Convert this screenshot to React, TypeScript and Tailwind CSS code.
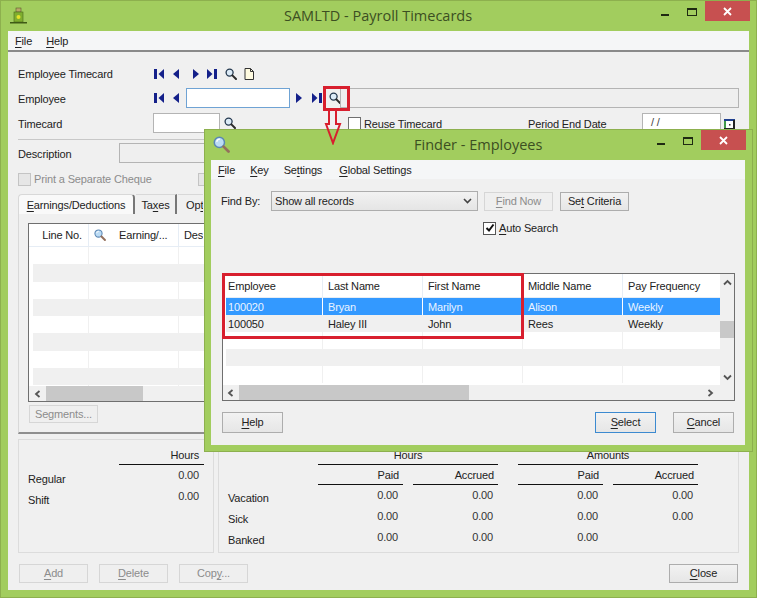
import React from "react";

type Dir = "first" | "prev" | "next" | "last";

function Nav({ dir, className = "" }: { dir: Dir; className?: string }) {
  const paths: Record<Dir, React.ReactNode> = {
    first: (
      <>
        <rect x="0" y="0" width="3" height="10" fill="#14208a" />
        <path d="M10 0V10L4.5 5Z" fill="#14208a" />
      </>
    ),
    prev: <path d="M7 0V10L1 5Z" fill="#14208a" />,
    next: <path d="M3 0V10L9 5Z" fill="#14208a" />,
    last: (
      <>
        <rect x="7" y="0" width="3" height="10" fill="#14208a" />
        <path d="M0 0V10L5.5 5Z" fill="#14208a" />
      </>
    ),
  };
  return (
    <svg width="10" height="10" viewBox="0 0 10 10" className={`shrink-0 ${className}`}>
      {paths[dir]}
    </svg>
  );
}

function Lens({ className = "" }: { className?: string }) {
  return (
    <svg width="12" height="12" viewBox="0 0 12 12" className={`shrink-0 ${className}`}>
      <circle cx="4.6" cy="4.6" r="3.5" fill="#dcebf7" stroke="#24384f" strokeWidth="1.3" />
      <path d="M7.4 7.4L11 11" stroke="#2b2b2b" strokeWidth="2" strokeLinecap="round" />
    </svg>
  );
}

function BigLens({ size = 16, className = "" }: { size?: number; className?: string }) {
  return (
    <svg width={size} height={size} viewBox="0 0 16 16" className={`shrink-0 ${className}`}>
      <circle cx="6" cy="6" r="4.8" fill="#bcdcf5" stroke="#5b87b4" strokeWidth="1.4" />
      <path d="M3.5 5.5A3 3 0 0 1 6.5 3" stroke="#ffffff" strokeWidth="1.2" fill="none" />
      <path d="M10 10L14.6 14.6" stroke="#94705c" strokeWidth="2.6" strokeLinecap="round" />
    </svg>
  );
}

function U({ children }: { children: React.ReactNode }) {
  return <span className="underline underline-offset-2 decoration-1">{children}</span>;
}

function Btn({
  children,
  w = "w-[69px]",
  h = "h-[19px]",
  disabled,
  primary,
  className = "",
}: {
  children: React.ReactNode;
  w?: string;
  h?: string;
  disabled?: boolean;
  primary?: boolean;
  className?: string;
}) {
  const tone = disabled
    ? "border-[#d6d6d6] text-[#8c8c8c] bg-[#efefef]"
    : primary
      ? "border-[#3c8ad0] text-[#222] bg-gradient-to-b from-[#f2f2f2] to-[#e6e6e6]"
      : "border-[#adadad] text-[#222] bg-gradient-to-b from-[#f2f2f2] to-[#e6e6e6]";
  return (
    <div className={`${w} ${h} shrink-0 border flex items-center justify-center text-[11px] leading-none ${tone} ${className}`}>
      <span>{children}</span>
    </div>
  );
}

function Val({ children, gap = "" }: { children?: React.ReactNode; gap?: string }) {
  return <div className={`w-[85px] pt-[2px] pr-[5px] text-right text-[#333] ${gap}`}>{children}</div>;
}

function MinMaxClose() {
  return (
    <div className="ml-auto flex items-start">
      <div className="w-[8px] h-[2px] bg-[#1f2a12] mt-[13px]" />
      <div className="w-[10px] h-[8px] ml-[18px] mt-[7px] border border-[#1f2a12] border-t-2" />
      <div className="w-[45px] h-[20px] ml-[8px] bg-[#c75050] flex items-center justify-center">
        <svg width="9" height="9" viewBox="0 0 9 9">
          <path d="M1 1L8 8M8 1L1 8" stroke="#fff" strokeWidth="1.8" />
        </svg>
      </div>
    </div>
  );
}

function ScrollH({ thumbW, thumbMl, showRight }: { thumbW: string; thumbMl: string; showRight?: boolean }) {
  return (
    <div className="h-[15px] bg-[#f0f0f0] flex items-center relative shrink-0">
      <svg width="8" height="8" viewBox="0 0 8 8" className={`${thumbMl} shrink-0`}>
        <path d="M5.5 1L2 4L5.5 7" stroke="#555" strokeWidth="1.8" fill="none" />
      </svg>
      <div className={`${thumbW} h-full bg-[#c8c8c8] ml-[4px]`} />
      {showRight && (
        <svg width="8" height="8" viewBox="0 0 8 8" className="ml-auto mr-[20px]">
          <path d="M2.5 1L6 4L2.5 7" stroke="#555" strokeWidth="1.8" fill="none" />
        </svg>
      )}
    </div>
  );
}

function MainContent() {
  const leftRows = Array.from({ length: 9 }, (_, i) => i);
  return (
    <div className="flex-1 flex flex-col bg-[#f0f0f0] min-h-0 relative">
      <div className="h-[21px] bg-[#f5f6f7] border-b-2 border-[#8a8a8a] flex items-center pl-[7px] gap-[14px] text-[#222] shrink-0">
        <span><U>F</U>ile</span>
        <span><U>H</U>elp</span>
      </div>

      <div className="flex items-center h-[20px] mt-[12px] pl-[10px]">
        <span className="w-[136px] shrink-0">Employee Timecard</span>
        <Nav dir="first" />
        <Nav dir="prev" className="ml-[8px]" />
        <Nav dir="next" className="ml-[8px]" />
        <Nav dir="last" className="ml-[7px]" />
        <Lens className="ml-[8px]" />
        <svg width="10" height="12" viewBox="0 0 10 12" className="ml-[7px] shrink-0">
          <path d="M1 .5H6.5L9.5 3.5V11.5H1Z" fill="#fffbe0" stroke="#333" />
          <path d="M6.5 .5V3.5H9.5" fill="none" stroke="#333" />
        </svg>
      </div>

      <div className="flex items-center h-[20px] mt-[4px] pl-[10px]">
        <span className="w-[136px] shrink-0 pt-[1px]">Employee</span>
        <Nav dir="first" />
        <Nav dir="prev" className="ml-[8px]" />
        <div className="w-[104px] h-[20px] ml-[4px] bg-white border border-[#6fa3d4] shrink-0" />
        <Nav dir="next" className="ml-[3px]" />
        <Nav dir="last" className="ml-[9px]" />
        <Lens className="ml-[7px]" />
        <div className="w-[399px] h-[20px] ml-[-1px] border border-[#b4b4b4] bg-[#efefef] shrink-0" />
      </div>

      <div className="flex items-center h-[20px] mt-[5px] pl-[10px]">
        <span className="w-[135px] shrink-0 pt-[1px]">Timecard</span>
        <div className="w-[67px] h-[20px] bg-white border border-[#b4b4b4] shrink-0" />
        <Lens className="ml-[4px]" />
        <div className="w-[13px] h-[13px] ml-[112px] bg-white border border-[#707070] shrink-0" />
        <span className="ml-[3px] w-[164px] shrink-0 pt-[1px]">Reuse Timecard</span>
        <span className="w-[114px] shrink-0 pt-[1px]">Period End Date</span>
        <div className="w-[79px] h-[20px] bg-white border border-[#b4b4b4] pl-[8px] shrink-0 text-[#444]">/ /</div>
        <svg width="11" height="11" viewBox="0 0 11 11" className="ml-[3px] mt-[3px] shrink-0">
          <rect x="0" y="0" width="11" height="11" fill="#fff" />
          <path d="M1 11V1" stroke="#3f9a4a" strokeWidth="2" />
          <path d="M0 1H11" stroke="#1f3f8e" strokeWidth="2" />
          <path d="M10 1V11M0 10H11" stroke="#222" strokeWidth="2" />
          <rect x="5" y="5" width="1.5" height="1.5" fill="#333" />
        </svg>
      </div>

      <div className="h-[1px] bg-[#c8c8c8] mt-[6px] ml-[10px] mr-[10px] shrink-0" />

      <div className="flex items-center h-[20px] mt-[3px] pl-[10px]">
        <span className="w-[101px] shrink-0 pt-[1px]">Description</span>
        <div className="w-[300px] h-[20px] border border-[#b4b4b4] bg-[#efefef] shrink-0" />
      </div>

      <div className="flex items-center h-[18px] mt-[7px] pl-[10px] text-[#8c8c8c]">
        <div className="w-[13px] h-[13px] border border-[#c4c4c4] bg-[#e6e6e6] shrink-0" />
        <span className="ml-[3px] w-[164px] shrink-0">Print a Separate Cheque</span>
        <div className="w-[13px] h-[13px] border border-[#c4c4c4] bg-[#e6e6e6] shrink-0" />
      </div>

      <div className="flex h-[20px] mt-[6px] ml-[10px] items-stretch">
        <div className="w-[117px] bg-white/60 border-t border-l border-r-2 border-[#d8d8d8] border-r-[#777] rounded-t-sm flex items-center justify-center shrink-0">
          <span><U>E</U>arnings/Deductions</span>
        </div>
        <div className="w-[41px] ml-[1px] border-t border-r-2 border-[#d8d8d8] border-r-[#777] flex items-center justify-center shrink-0">
          <span>Ta<U>x</U>es</span>
        </div>
        <div className="w-[25px] ml-[1px] border-t border-[#d8d8d8] flex items-center pl-[8px] overflow-hidden whitespace-nowrap shrink-0">
          <span>Op<U>t</U>ional</span>
        </div>
      </div>

      <div className="h-[220px] ml-[10px] mr-[10px] border-l border-r border-b-2 border-[#d8d8d8] border-b-[#8f8f8f] pl-[9px] pt-[9px] shrink-0">
        <div className="w-[400px] h-[179px] border border-[#6f6f6f] bg-white flex flex-col overflow-hidden">
          <div className="h-[23px] flex items-center border-b border-[#e6edf5] shrink-0">
            <div className="w-[60px] h-full border-r border-[#e6edf5] flex items-center justify-end pr-[6px]">Line No.</div>
            <div className="w-[90px] h-full border-r border-[#e6edf5] flex items-center pl-[5px]">
              <BigLens size={12} />
              <span className="ml-[13px]">Earning/...</span>
            </div>
            <div className="w-[24px] pl-[5px] overflow-hidden whitespace-nowrap">Description</div>
          </div>
          <div className="flex-1 min-h-0 ml-[4px] overflow-hidden">
            {leftRows.map((i) => (
              <div key={i} className={`flex h-[17.25px] ${i % 2 ? "bg-[#f0f0f0]" : "bg-white"}`}>
                <div className="w-[56px] border-r border-[#f0f0f0]" />
                <div className="w-[90px] border-r border-[#f0f0f0]" />
              </div>
            ))}
          </div>
          <ScrollH thumbW="w-[97px]" thumbMl="ml-[5px]" />
        </div>
        <Btn disabled className="mt-[3px] ml-[1px] border-[#d0d0d0]" h="h-[18px]">Segments...</Btn>
      </div>

      <div className="flex mt-[5px] ml-[10px] gap-[4px] h-[114px] shrink-0">
        <div className="w-[196px] border border-[#dcdcdc] shrink-0 pt-[7px]">
          <div className="ml-[100px] w-[85px] h-[18px] border-b border-[#111] text-right pr-[5px]">Hours</div>
          <div className="flex h-[21px]">
            <div className="w-[100px] pl-[9px] pt-[6px]">Regular</div>
            <Val>0.00</Val>
          </div>
          <div className="flex h-[21px]">
            <div className="w-[100px] pl-[9px] pt-[6px]">Shift</div>
            <Val>0.00</Val>
          </div>
        </div>
        <div className="w-[521px] border border-[#dcdcdc] shrink-0 pt-[7px]">
          <div className="flex ml-[99px] h-[18px]">
            <div className="w-[180px] border-b border-[#111] text-center">Hours</div>
            <div className="w-[180px] ml-[20px] border-b border-[#111] text-center">Amounts</div>
          </div>
          <div className="flex ml-[99px] h-[20px]">
            <div className="w-[85px] border-b border-[#111] text-right pr-[4px] pt-[2px]">Paid</div>
            <div className="w-[85px] ml-[10px] border-b border-[#111] text-right pr-[4px] pt-[2px]">Accrued</div>
            <div className="w-[85px] ml-[20px] border-b border-[#111] text-right pr-[4px] pt-[2px]">Paid</div>
            <div className="w-[85px] ml-[10px] border-b border-[#111] text-right pr-[4px] pt-[2px]">Accrued</div>
          </div>
          {[
            ["Vacation", true],
            ["Sick", true],
            ["Banked", false],
          ].map(([label, acc]) => (
            <div key={label as string} className="flex h-[21px]">
              <div className="w-[99px] pl-[9px] pt-[5px]">{label}</div>
              <Val>0.00</Val>
              <Val gap="ml-[10px]">0.00</Val>
              <Val gap="ml-[20px]">0.00</Val>
              <Val gap="ml-[10px]">{acc ? "0.00" : ""}</Val>
            </div>
          ))}
        </div>
      </div>

      <div className="flex mt-[11px] ml-[11px] mr-[11px]">
        <Btn disabled><U>A</U>dd</Btn>
        <Btn disabled className="ml-[11px]"><U>D</U>elete</Btn>
        <Btn disabled className="ml-[11px]">Cop<U>y</U>...</Btn>
        <Btn className="ml-auto"><U>C</U>lose</Btn>
      </div>
    </div>
  );
}

function FinderWindow() {
  const cols = [
    ["Employee", "w-[97px] pl-[2px]"],
    ["Last Name", "w-[100px] pl-[5px]"],
    ["First Name", "w-[100px] pl-[5px]"],
    ["Middle Name", "w-[100px] pl-[5px]"],
    ["Pay Frequency", "flex-1 pl-[5px]"],
  ];
  const rows: { vals: string[]; tone: string; line: string; h: string }[] = [
    { vals: ["100020", "Bryan", "Marilyn", "Alison", "Weekly"], tone: "bg-[#3399ff] text-[#eaf4ff]", line: "border-white", h: "h-[17px]" },
    { vals: ["100050", "Haley III", "John", "Rees", "Weekly"], tone: "bg-[#f0f0f0] text-[#222]", line: "border-[#f0f0f0]", h: "h-[17px]" },
    { vals: ["", "", "", "", ""], tone: "bg-white", line: "border-[#f0f0f0]", h: "h-[17px]" },
    { vals: ["", "", "", "", ""], tone: "bg-[#f0f0f0]", line: "border-[#f0f0f0]", h: "h-[17px]" },
    { vals: ["", "", "", "", ""], tone: "bg-white", line: "border-[#f0f0f0]", h: "h-[17px]" },
  ];
  return (
    <div className="absolute left-[203px] top-[128px] w-[549px] h-[323px] bg-[#a2cd5e] border border-[#8db04e] flex flex-col">
      <div className="h-[30px] flex items-start relative shrink-0">
        <BigLens size={17} className="ml-[8px] mt-[6px]" />
        <span className="absolute left-[209px] top-[4px] text-[14.5px] leading-[22px] tracking-normal text-[#3c4f22] font-['Open_Sans',sans-serif]">Finder - Employees</span>
        <MinMaxClose />
        <div className="w-[6px]" />
      </div>
      <div className="flex-1 ml-[6px] mr-[7px] mb-[6px] bg-[#f0f0f0] flex flex-col min-h-0">
        <div className="h-[19px] bg-[#f5f6f7] flex items-center pl-[7px] shrink-0">
          <span><U>F</U>ile</span>
          <span className="ml-[15px]"><U>K</U>ey</span>
          <span className="ml-[15px]">Se<U>t</U>tings</span>
          <span className="ml-[17px]"><U>G</U>lobal Settings</span>
        </div>
        <div className="flex items-center h-[20px] mt-[12px] pl-[10px]">
          <span className="w-[50px] shrink-0">Find By:</span>
          <div className="w-[207px] h-[20px] border border-[#adadad] bg-gradient-to-b from-[#f2f2f2] to-[#e5e5e5] flex items-center pl-[3px] pr-[5px] shrink-0">
            <span>Show all records</span>
            <svg width="9" height="6" viewBox="0 0 9 6" className="ml-auto">
              <path d="M1 1L4.5 4.5L8 1" stroke="#444" strokeWidth="1.6" fill="none" />
            </svg>
          </div>
          <Btn disabled className="ml-[6px]"><U>F</U>ind Now</Btn>
          <Btn className="ml-[7px]">Se<U>t</U> Criteria</Btn>
        </div>
        <div className="flex items-center h-[14px] mt-[10px] pl-[272px]">
          <div className="w-[13px] h-[13px] bg-white border border-[#555] flex items-center justify-center shrink-0">
            <svg width="10" height="10" viewBox="0 0 10 10">
              <path d="M1.5 5L4 7.5L8.5 1.5" stroke="#111" strokeWidth="2" fill="none" />
            </svg>
          </div>
          <span className="ml-[3px]"><U>A</U>uto Search</span>
        </div>
        <div className="h-[128px] mt-[38px] ml-[11px] mr-[10px] border border-[#6f6f6f] bg-white flex flex-col shrink-0">
          <div className="flex flex-1 min-h-0">
            <div className="flex-1 min-w-0 pl-[3px]">
              <div className="flex h-[24px] border-b border-[#e6edf5]">
                {cols.map(([t, c], i) => (
                  <div key={t} className={`${c} ${i < 4 ? "border-r border-[#e6edf5]" : ""} flex items-center`}>{t}</div>
                ))}
              </div>
              {rows.map((r, ri) => (
                <div key={ri} className={`flex ${r.h} ${r.tone}`}>
                  {r.vals.map((v, i) => (
                    <div key={i} className={`${cols[i][1]} ${i < 4 ? `border-r ${r.line}` : ""} flex items-center`}>{v}</div>
                  ))}
                </div>
              ))}
            </div>
            <div className="w-[14px] bg-[#f0f0f0] flex flex-col items-center shrink-0">
              <svg width="9" height="8" viewBox="0 0 9 8" className="mt-[5px]">
                <path d="M1 5.5L4.5 2L8 5.5" stroke="#555" strokeWidth="1.8" fill="none" />
              </svg>
              <div className="w-full h-[17px] bg-[#c8c8c8] mt-[34px]" />
              <svg width="9" height="8" viewBox="0 0 9 8" className="mt-[35px]">
                <path d="M1 2.5L4.5 6L8 2.5" stroke="#555" strokeWidth="1.8" fill="none" />
              </svg>
            </div>
          </div>
          <ScrollH thumbW="w-[230px]" thumbMl="ml-[4px]" showRight />
        </div>
        <div className="flex mt-[11px] ml-[11px] mr-[11px]">
          <Btn w="w-[61px]" h="h-[21px]"><U>H</U>elp</Btn>
          <Btn w="w-[61px]" h="h-[21px]" primary className="ml-auto"><U>S</U>elect</Btn>
          <Btn w="w-[61px]" h="h-[21px]" className="ml-[17px]"><U>C</U>ancel</Btn>
        </div>
      </div>
    </div>
  );
}

export default function App() {
  return (
    <div className="relative w-[757px] h-[598px] overflow-hidden bg-[#a2cd5e] border border-[#8db04e] flex flex-col text-[11px] leading-[16px] tracking-[-0.15px] text-[#222] font-['Liberation_Sans',sans-serif]">
      <div className="h-[30px] flex items-start relative shrink-0">
        <svg width="18" height="18" viewBox="0 0 18 18" className="ml-[9px] mt-[6px] shrink-0">
          <rect x="6" y="1" width="5" height="4" fill="#b9a76a" stroke="#5a5a2a" strokeWidth=".6" />
          <rect x="4" y="5" width="9" height="10" fill="#7fae2f" stroke="#47691a" strokeWidth=".6" />
          <circle cx="8.5" cy="10" r="2" fill="#e3e22a" />
          <rect x="0" y="15" width="17" height="1.5" fill="#3f5a16" />
        </svg>
        <span className="absolute left-[283px] top-[4px] text-[14.5px] leading-[22px] tracking-normal text-[#3c4f22] font-['Open_Sans',sans-serif]">SAMLTD - Payroll Timecards</span>
        <MinMaxClose />
        <div className="w-[6px]" />
      </div>
      <div className="flex-1 ml-[7px] mr-[7px] mb-[7px] min-h-0 flex flex-col">
        <MainContent />
      </div>

      <FinderWindow />

      <div className="absolute left-[322px] top-[85px] w-[27px] h-[25px] border-[3px] border-[#d81f2e]" />
      <svg width="24" height="38" viewBox="0 0 24 38" className="absolute left-[320px] top-[106px]">
        <path d="M8 2V17H5L12 36L19 17H15V2" fill="none" stroke="#d81f2e" strokeWidth="2" />
      </svg>
      <div className="absolute left-[221px] top-[272px] w-[302px] h-[66px] border-[3px] border-[#d81f2e]" />
    </div>
  );
}
